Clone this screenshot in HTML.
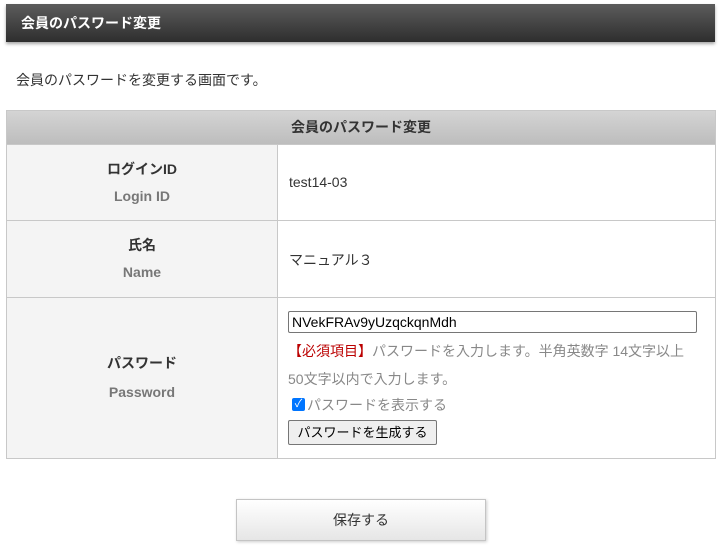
<!DOCTYPE html>
<html><head><meta charset="utf-8"><style>
*{margin:0;padding:0;box-sizing:border-box}
body{width:721px;height:549px;background:#fff;font-family:"Liberation Sans","Noto Sans CJK JP",sans-serif;position:relative;overflow:hidden;color:#333}
.hd{position:absolute;left:6px;top:4px;width:709px;height:38px;background:linear-gradient(#5c5c5c,#2e2e2e);box-shadow:0 2px 3px rgba(0,0,0,.35);color:#fff;font-weight:bold;font-size:14px;line-height:38px;padding-left:15px}
.intro{position:absolute;left:16px;top:70px;font-size:14px;color:#333}
.b{position:absolute;border:1px solid #c8c8c8}
.th{left:6px;top:110px;width:710px;height:35px;background:linear-gradient(#d4d4d4,#bdbdbd);text-align:center;font-weight:bold;font-size:14px;line-height:33px;color:#333}
.l{left:6px;width:272px;background:#f4f4f4;text-align:center;font-weight:bold;font-size:14px}
.r{left:277px;width:439px;font-size:14px}
.en{color:#777;margin-top:9px}
</style></head><body>
<div class="hd">会員のパスワード変更</div>
<div class="intro">会員のパスワードを変更する画面です。</div>
<div class="b th">会員のパスワード変更</div>
<div class="b l" style="top:144px;height:77px;padding-top:14px">ログインID<div class="en">Login ID</div></div>
<div class="b r" style="top:144px;height:77px;padding:29px 0 0 11px">test14-03</div>
<div class="b l" style="top:220px;height:78px;padding-top:14px">氏名<div class="en">Name</div></div>
<div class="b r" style="top:220px;height:78px;padding:29px 0 0 11px">マニュアル３</div>
<div class="b l" style="top:297px;height:162px;padding-top:55px">パスワード<div class="en" style="margin-top:11px">Password</div></div>
<div class="b r" style="top:297px;height:162px">
<div style="position:absolute;left:10px;top:13px;width:409px;height:22px;border:1px solid #767676;border-radius:2px;font-size:14px;line-height:20px;padding-left:3px;color:#000">NVekFRAv9yUzqckqnMdh</div>
<div style="position:absolute;left:10px;top:39px;width:420px;font-size:14px;line-height:28px;color:#888"><span style="color:#b00">【必須項目】</span>パスワードを入力します。半角英数字 14文字以上<br>50文字以内で入力します。</div>
<div style="position:absolute;left:14px;top:100px;width:13px;height:13px;background:#0075ff;border-radius:2px;color:#fff;font-size:11px;line-height:13px;text-align:center">✓</div>
<div style="position:absolute;left:29px;top:97px;font-size:14px;color:#888">パスワードを表示する</div>
<div style="position:absolute;left:10px;top:122px;width:149px;height:25px;border:1px solid #767676;border-radius:2px;background:#efefef;font-size:13px;line-height:23px;text-align:center;color:#000">パスワードを生成する</div>
</div>
<div style="position:absolute;left:236px;top:499px;width:250px;height:42px;border:1px solid #c4c4c4;background:linear-gradient(#fff,#e6e6e6);box-shadow:1px 1px 3px rgba(0,0,0,.2);text-align:center;line-height:40px;font-size:14px;color:#333">保存する</div>
</body></html>
